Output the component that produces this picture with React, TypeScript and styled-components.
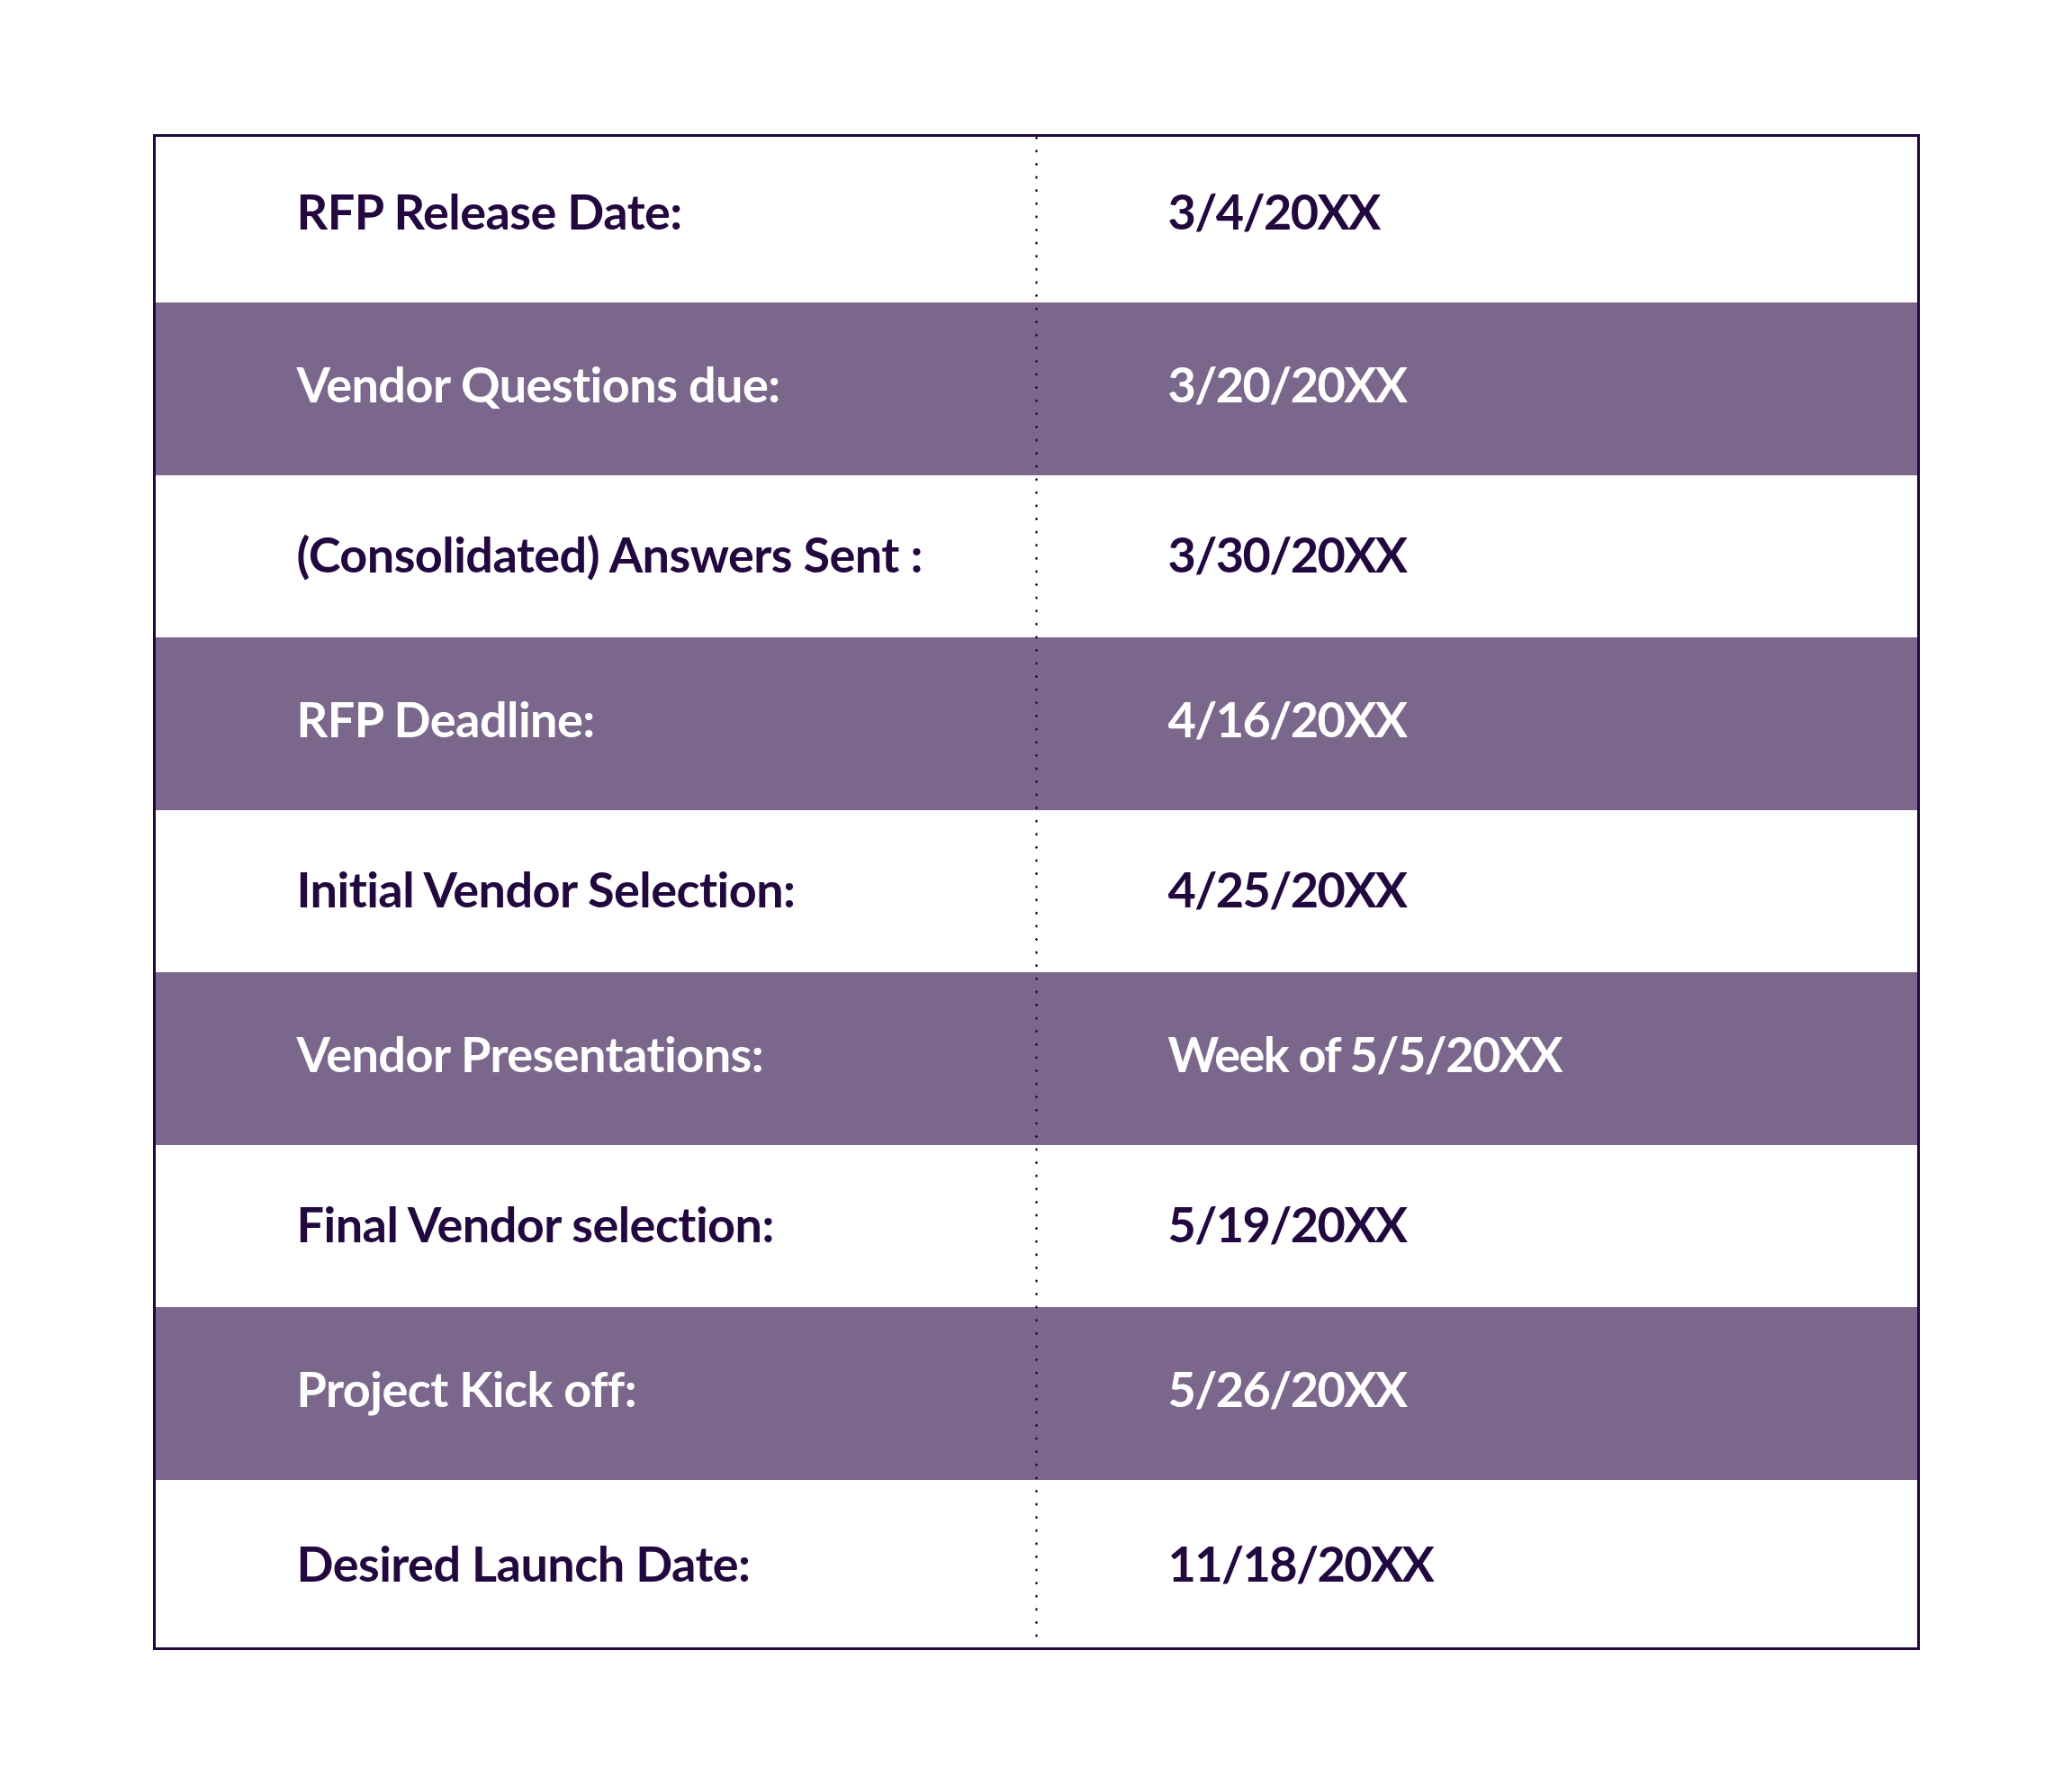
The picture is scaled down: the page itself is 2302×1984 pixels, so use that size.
import styled, { createGlobalStyle } from 'styled-components';

interface IMilestone {
  label: string;
  date: string;
}

const milestones: IMilestone[] = [
  { label: 'RFP Release Date:', date: '3/4/20XX' },
  { label: 'Vendor Questions due:', date: '3/20/20XX' },
  { label: '(Consolidated) Answers Sent :', date: '3/30/20XX' },
  { label: 'RFP Deadline:', date: '4/16/20XX' },
  { label: 'Initial Vendor Selection:', date: '4/25/20XX' },
  { label: 'Vendor Presentations:', date: 'Week of 5/5/20XX' },
  { label: 'Final Vendor selection:', date: '5/19/20XX' },
  { label: 'Project Kick off:', date: '5/26/20XX' },
  { label: 'Desired Launch Date:', date: '11/18/20XX' },
];

const INK = '#22083f';
const BAND = '#7b678c';

const GlobalStyle = createGlobalStyle`
  html, body {
    margin: 0;
    padding: 0;
    background: #ffffff;
  }
  body {
    font-family: Lato, "Open Sans", sans-serif;
  }
`;

const Page = styled.div`
  width: 2302px;
  height: 1984px;
  padding-top: 149px;
  box-sizing: border-box;
`;

const Table = styled.div`
  position: relative;
  width: 1963px;
  margin: 0 auto;
  border: 3px solid ${INK};
  box-sizing: border-box;

  /* dotted column divider drawn over the rows */
  &::after {
    content: '';
    position: absolute;
    top: 0;
    bottom: 0;
    left: 977px;
    width: 3px;
    background-image: radial-gradient(circle, ${INK} 1.1px, transparent 1.5px);
    background-size: 3px 14.6px;
    background-position: 0 -6px;
    background-repeat: repeat-y;
  }
`;

const Row = styled.div<{ $band: boolean }>`
  display: grid;
  grid-template-columns: 978px 1fr;
  align-items: center;
  box-sizing: border-box;
  height: ${({ $band }) => ($band ? '192px' : '180px')};
  padding-bottom: ${({ $band }) => ($band ? '9px' : '4px')};
  background: ${({ $band }) => ($band ? BAND : '#ffffff')};
  color: ${({ $band }) => ($band ? '#ffffff' : INK)};

  &:first-child {
    height: 184px;
    padding-bottom: 18px;
  }

  &:last-child {
    height: 186px;
    padding-bottom: 0;
  }
`;

const Label = styled.div`
  padding-left: 157px;
  font-size: 54px;
  font-weight: 700;
  letter-spacing: -0.55px;
  line-height: 1.2;
  white-space: nowrap;
`;

const Value = styled(Label)`
  padding-left: 147px;
  letter-spacing: -1.6px;
`;

export default function App(): JSX.Element {
  return (
    <Page>
      <GlobalStyle />
      <Table>
        {milestones.map((m, i) => (
          <Row key={m.label} $band={i % 2 === 1}>
            <Label>{m.label}</Label>
            <Value>{m.date}</Value>
          </Row>
        ))}
      </Table>
    </Page>
  );
}
